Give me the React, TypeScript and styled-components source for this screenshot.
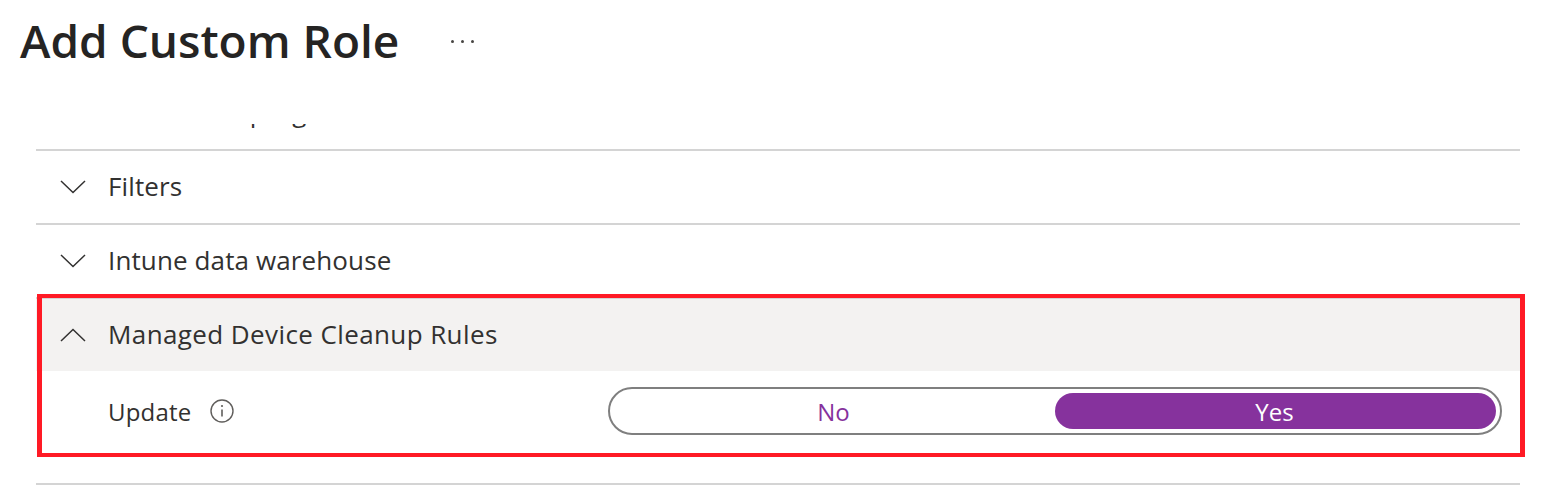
import { FC } from 'react';
import styled, { createGlobalStyle } from 'styled-components';

const GlobalStyle = createGlobalStyle`
  html, body {
    margin: 0;
    padding: 0;
    background: #fff;
    overflow: hidden;
  }
  body {
    font-family: "Open Sans", "Noto Sans", sans-serif;
    color: #323130;
  }
`;

const Chevron: FC<{ up?: boolean }> = ({ up }) => (
  <SChevron viewBox="0 0 26 14" aria-hidden="true">
    <path d={up ? 'M1 13 13 1.5 25 13' : 'M1 1 13 12.5 25 1'} />
  </SChevron>
);

const CollapsedRow: FC<{ label: string }> = ({ label }) => (
  <SRow>
    <SRowHeader>
      <Chevron />
      <SRowLabel>{label}</SRowLabel>
    </SRowHeader>
  </SRow>
);

export default function App() {
  return (
    <SPage>
      <GlobalStyle />
      <STitleBar>
        <STitle>Add Custom Role</STitle>
        <SMore aria-label="More">
          <i />
          <i />
          <i />
        </SMore>
      </STitleBar>
      <SList>
        {/* 上の行はスクロールで隠れている */}
        <SScrollEdge>
          <SClippedRow>
            <SRowHeader>
              <SChevronGap />
              <SRowLabel>Enrollment programs</SRowLabel>
            </SRowHeader>
          </SClippedRow>
        </SScrollEdge>
        <CollapsedRow label="Filters" />
        <CollapsedRow label="Intune data warehouse" />
        <SExpandedRow>
          <SExpandedHeader>
            <Chevron up />
            <SExpandedLabel>Managed Device Cleanup Rules</SExpandedLabel>
          </SExpandedHeader>
          <SBody>
            <SField>
              <SFieldLabel>Update</SFieldLabel>
              <SInfo viewBox="0 0 24 24" aria-hidden="true">
                <circle cx="12" cy="12" r="11" />
                <path d="M12 10.5v7" />
                <circle className="dot" cx="12" cy="7" r="1.1" />
              </SInfo>
            </SField>
            <SToggle>
              <SOption>No</SOption>
              <SOption $active>Yes</SOption>
            </SToggle>
          </SBody>
        </SExpandedRow>
      </SList>
    </SPage>
  );
}

const SPage = styled.div`
  width: 1552px;
  height: 490px;
  overflow: hidden;
  background: #fff;
`;

const STitleBar = styled.header`
  display: flex;
  align-items: center;
  height: 84px;
  box-sizing: border-box;
  margin-bottom: 40px;
  padding: 0 0 4px 20px;
`;

const STitle = styled.h1`
  margin: 0;
  font-size: 46px;
  line-height: 60px;
  font-weight: 600;
  color: #252423;
`;

const SMore = styled.div`
  display: flex;
  gap: 7px;
  margin: 2px 0 0 52px;

  i {
    display: block;
    width: 3px;
    height: 3px;
    border-radius: 50%;
    background: #484644;
  }
`;

const SList = styled.div`
  width: 1484px;
  margin-left: 36px;
`;

const SScrollEdge = styled.div`
  overflow: hidden;
`;

const SRow = styled.section`
  border-bottom: 2px solid #d4d4d4;
`;

const SClippedRow = styled(SRow)`
  margin-top: -47px;
`;

const SRowHeader = styled.div`
  display: flex;
  align-items: center;
  height: 72px;
  padding-left: 24px;
`;

const SExpandedRow = styled(SRow)`
  position: relative;

  &::after {
    content: '';
    position: absolute;
    top: -5px;
    left: 1px;
    width: 1488px;
    height: 163px;
    box-sizing: border-box;
    border-style: solid;
    border-color: #ff1a25;
    border-width: 4px 5px;
    pointer-events: none;
  }
`;

const SExpandedHeader = styled(SRowHeader)`
  background: #f3f2f1;
`;

const SChevron = styled.svg`
  flex: none;
  width: 26px;
  height: 14px;
  margin-right: 22px;

  path {
    fill: none;
    stroke: #323130;
    stroke-width: 1.5;
  }
`;

const SChevronGap = styled.span`
  flex: none;
  width: 48px;
`;

const SRowLabel = styled.span`
  margin-bottom: 3px;
  font-size: 26px;
  line-height: 34px;
  letter-spacing: 0.12px;
  color: #323130;
`;

const SExpandedLabel = styled(SRowLabel)`
  letter-spacing: 0.4px;
`;

const SBody = styled.div`
  display: flex;
  align-items: center;
  height: 112px;
  padding: 0 18px 32px 72px;
  box-sizing: border-box;
`;

const SField = styled.div`
  display: flex;
  align-items: center;
  width: 500px;
  flex: none;
`;

const SFieldLabel = styled.span`
  padding-top: 2px;
  font-size: 24px;
  line-height: 34px;
  letter-spacing: 0.2px;
  color: #323130;
`;

const SInfo = styled.svg`
  width: 24px;
  height: 24px;
  margin-left: 19px;

  circle {
    fill: none;
    stroke: #605e5c;
    stroke-width: 1.4;
  }
  path {
    fill: none;
    stroke: #605e5c;
    stroke-width: 1.6;
  }
  .dot {
    fill: #605e5c;
    stroke: none;
  }
`;

const SToggle = styled.div`
  flex: 1;
  display: grid;
  grid-template-columns: 1fr 1fr;
  height: 48px;
  padding: 4px;
  box-sizing: border-box;
  border: 2px solid #7f7f7f;
  border-radius: 24px;
`;

const SOption = styled.div<{ $active?: boolean }>`
  display: flex;
  align-items: center;
  justify-content: center;
  padding-right: 2px;
  border-radius: 18px;
  font-size: 24px;
  background: ${(p) => (p.$active ? '#86329d' : 'transparent')};
  color: ${(p) => (p.$active ? '#fff' : '#86329d')};
`;
